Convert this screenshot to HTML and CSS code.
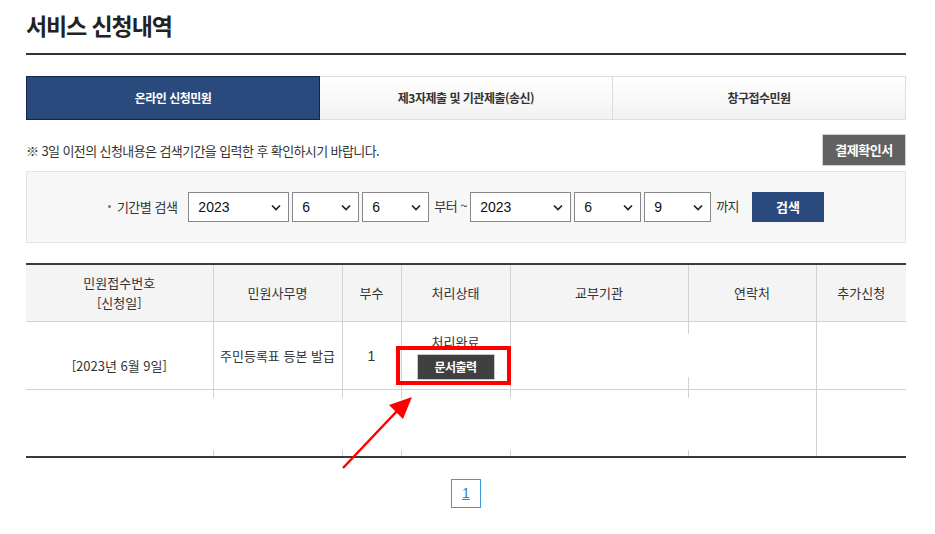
FILE: index.html
```html
<!DOCTYPE html>
<html lang="ko">
<head>
	<meta charset="UTF-8">
	<title>서비스 신청내역</title>
	<link rel="stylesheet" href="styles.css">
</head>
<body>
	<div id="wrap">
		<h1 class="page-title">서비스 신청내역</h1>

		<ul class="tabs">
			<li class="on"><a href="javascript:void(0)">온라인 신청민원</a></li>
			<li><a href="javascript:void(0)">제3자제출 및 기관제출(송신)</a></li>
			<li><a href="javascript:void(0)">창구접수민원</a></li>
		</ul>

		<div class="notice-row">
			<p class="notice">※ 3일 이전의 신청내용은 검색기간을 입력한 후 확인하시기 바랍니다.</p>
			<a class="btn-gray" href="javascript:void(0)">결제확인서</a>
		</div>

		<div class="search-box">
			<span class="label">기간별 검색</span>
			<select class="sel-year"><option>2023</option></select>
			<select class="sel-num"><option>6</option></select>
			<select class="sel-num"><option>6</option></select>
			<span class="txt">부터 ~</span>
			<select class="sel-year"><option>2023</option></select>
			<select class="sel-num"><option>6</option></select>
			<select class="sel-num"><option>9</option></select>
			<span class="txt">까지</span>
			<a class="btn-search" href="javascript:void(0)">검색</a>
		</div>

		<div class="table-wrap">
			<table class="list">
				<colgroup>
					<col style="width:187px">
					<col style="width:129px">
					<col style="width:59px">
					<col style="width:109px">
					<col style="width:178px">
					<col style="width:128px">
					<col style="width:90px">
				</colgroup>
				<thead>
					<tr>
						<th>민원접수번호<br>[신청일]</th>
						<th>민원사무명</th>
						<th>부수</th>
						<th>처리상태</th>
						<th>교부기관</th>
						<th>연락처</th>
						<th>추가신청</th>
					</tr>
				</thead>
				<tbody>
					<tr class="row-data">
						<td>&nbsp;<br>[2023년 6월 9일]</td>
						<td>주민등록표 등본 발급</td>
						<td class="num">1</td>
						<td>처리완료<br><a class="btn-print" href="javascript:void(0)">문서출력</a></td>
						<td></td>
						<td class="stub"></td>
						<td></td>
					</tr>
					<tr class="row-empty">
						<td></td>
						<td class="stub"></td>
						<td class="stub"></td>
						<td class="stub"></td>
						<td class="stub"></td>
						<td class="stub"></td>
						<td></td>
					</tr>
				</tbody>
			</table>

			<!-- annotation -->
			<div class="mark-box"></div>
			<svg class="mark-arrow" width="90" height="85" viewBox="0 0 90 85">
				<line x1="13" y1="78" x2="68" y2="20" stroke="#ff0000" stroke-width="2.5"/>
				<polygon points="82,7 59,15 73,29" fill="#ff0000"/>
			</svg>
		</div>

		<div class="paging">
			<a href="javascript:void(0)">1</a>
		</div>
	</div>
</body>
</html>
```

FILE: styles.css
```css
body{
	margin: 0;
	font: 13px/20px "Noto Sans CJK KR", "Noto Sans", sans-serif;
	color: #333;
	background: #fff;
}
ul,p,h1{
	margin: 0;
	padding: 0;
}
ul{
	list-style-type: none;
}
a{
	text-decoration: none;
	color: inherit;
}
#wrap{
	width: 880px;
	padding-left: 26px;
}
.page-title{
	padding: 9px 0 12px;
	font-size: 23px;
	line-height: 32px;
	font-weight: 700;
	letter-spacing: -1.1px;
	color: #222;
	border-bottom: 2px solid #333;
}

/* tabs */
.tabs{
	display: flex;
	margin-top: 21px;
}
.tabs li{
	flex: 1;
	height: 42px;
	border: 1px solid #ddd;
	border-left: 0;
	background: linear-gradient(#fff, #f2f2f2);
}
.tabs li:last-child{
	border-right: 1px solid #ddd;
}
.tabs li a{
	display: block;
	line-height: 42px;
	text-align: center;
	font-size: 12px;
	font-weight: 700;
	letter-spacing: -0.5px;
	color: #333;
}
.tabs li.on{
	background: #2a4a7d;
	border: 1px solid #14264a;
}
.tabs li.on a{
	color: #fff;
}

/* notice */
.notice-row{
	display: flex;
	justify-content: space-between;
	align-items: center;
	margin-top: 14px;
}
.notice{
	font-size: 13px;
	letter-spacing: -0.6px;
	padding-top: 2px;
}
.btn-gray{
	display: block;
	width: 82px;
	height: 30px;
	line-height: 30px;
	text-align: center;
	background: #616161;
	border: 1px solid #cfcfcf;
	color: #fff;
	font-weight: 700;
	letter-spacing: -0.5px;
}

/* search */
.search-box{
	display: flex;
	align-items: center;
	justify-content: center;
	box-sizing: border-box;
	height: 72px;
	margin-top: 5px;
	background: #f7f7f7;
	border: 1px solid #e3e3e3;
}
.search-box .label{
	margin-right: 11px;
	letter-spacing: -0.5px;
}
.search-box .label:before{
	content: "";
	display: inline-block;
	width: 3px;
	height: 3px;
	margin: 0 6px 3px 0;
	background: #777;
	border-radius: 50%;
	vertical-align: middle;
}
.search-box select{
	-webkit-appearance: none;
	appearance: none;
	box-sizing: border-box;
	height: 30px;
	margin-right: 3px;
	padding: 0 0 0 9px;
	border: 1px solid #888;
	border-radius: 0;
	background: #fff url("data:image/svg+xml;utf8,<svg xmlns='http://www.w3.org/2000/svg' width='10' height='7'><path d='M1 1.5l4 4 4-4' fill='none' stroke='%23222' stroke-width='1.7'/></svg>") no-repeat right 7px center;
	font: 14px "Liberation Sans", Arial, sans-serif;
	color: #111;
}
.search-box .sel-year{
	width: 101px;
}
.search-box .sel-num{
	width: 67px;
}
.search-box .txt{
	margin: 0 3px 2px 2px;
	letter-spacing: -0.5px;
}
.search-box .txt + .btn-search{
	margin-left: 10px;
}
.btn-search{
	display: block;
	width: 72px;
	height: 30px;
	line-height: 30px;
	text-align: center;
	background: #2a4a7d;
	color: #fff;
	font-weight: 700;
}

/* list */
.table-wrap{
	position: relative;
	margin-top: 20px;
}
.list{
	width: 880px;
	border-collapse: collapse;
	table-layout: fixed;
	border-top: 2px solid #3a3a3a;
	border-bottom: 2px solid #3a3a3a;
}
.list th{
	height: 56px;
	padding: 0;
	background: #f4f4f4;
	font-weight: 400;
	color: #333;
	border-left: 1px solid #d2d2d2;
	border-bottom: 1px solid #d2d2d2;
}
.list th:first-child,
.list td:first-child{
	border-left: 0;
}
.list td{
	padding: 0;
	text-align: center;
	border-left: 1px solid #d2d2d2;
}
.list .row-data td{
	height: 67px;
	border-bottom: 1px solid #d2d2d2;
}
.list .row-data .num{
	font: 14px "Liberation Sans", Arial, sans-serif;
}
.list .row-empty td{
	height: 66px;
}
.list td.stub{
	border-left: 0;
	background:
		linear-gradient(#d2d2d2, #d2d2d2) left top / 1px 12px no-repeat,
		linear-gradient(#d2d2d2, #d2d2d2) left bottom / 1px 12px no-repeat;
}
.list .row-empty td.stub{
	background:
		linear-gradient(#d2d2d2, #d2d2d2) left top / 1px 8px no-repeat,
		linear-gradient(#d2d2d2, #d2d2d2) left bottom / 1px 6px no-repeat;
}
.btn-print{
	display: inline-block;
	width: 76px;
	height: 24px;
	line-height: 24px;
	margin-top: 2px;
	background: #404040;
	border: 1px solid #c8c8c8;
	color: #fff;
	font-size: 12px;
	font-weight: 700;
	letter-spacing: -0.5px;
	vertical-align: top;
}

/* annotation over the list */
.mark-box{
	position: absolute;
	left: 370px;
	top: 83px;
	width: 107px;
	height: 31px;
	border: 4px solid #ff0000;
}
.mark-arrow{
	position: absolute;
	left: 304px;
	top: 127px;
}

/* paging */
.paging{
	margin-top: 21px;
	text-align: center;
}
.paging a{
	display: inline-block;
	box-sizing: border-box;
	width: 30px;
	height: 29px;
	border: 1px solid #3c9be0;
	color: #2c86cc;
	font: 14px/27px "Liberation Sans", Arial, sans-serif;
	text-decoration: underline;
}
```
